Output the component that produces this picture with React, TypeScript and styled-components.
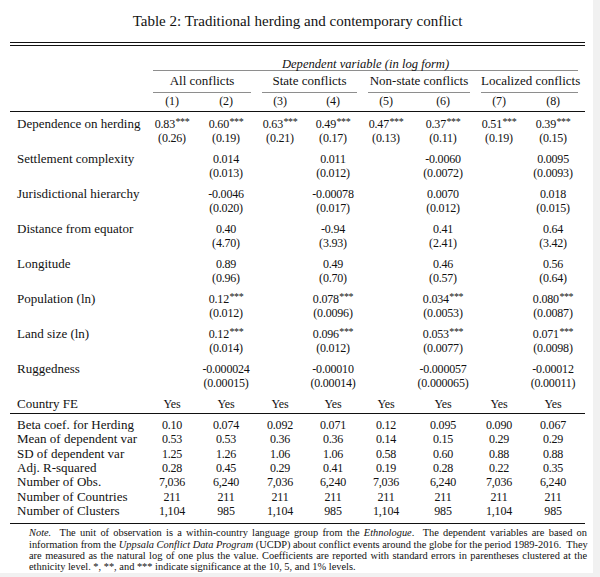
import React from "react";
import styled, { createGlobalStyle } from "styled-components";

const Global = createGlobalStyle`
  html, body { margin: 0; padding: 0; background: #f1f1f1; }
  body { width: 600px; height: 577px; overflow: hidden; }
`;

const Page = styled.div`
  width: 593px;
  height: 573px;
  background: #ffffff;
  box-sizing: border-box;
  padding: 12px 0 0 10px;
  color: #111111;
  font-family: "Liberation Serif", "Times New Roman", serif;
`;

const Title = styled.h1`
  margin: 0;
  width: 575px;
  text-align: center;
  font-size: 15px;
  line-height: 18px;
  font-weight: normal;
`;

const DoubleRule = styled.div`
  width: 575px;
  margin-top: 12px;
  height: 2px;
  border-top: 1px solid #111;
  border-bottom: 1px solid #111;
`;

const Table = styled.table`
  width: 575px;
  table-layout: fixed;
  border-collapse: separate;
  border-spacing: 0;
  font-family: "Liberation Serif", "Times New Roman", serif;
  color: #111111;
`;

const HeadCell = styled.th`
  padding: 0;
  font-weight: normal;
`;

const SpanLabel = styled.div<{ $l: number; $r: number; $pt: number; $pb: number; $italic?: boolean }>`
  margin: 0 ${(p) => p.$r}px 0 ${(p) => p.$l}px;
  padding: ${(p) => p.$pt}px 0 ${(p) => p.$pb}px;
  border-bottom: 1px solid #8e8e8e;
  text-align: center;
  font-size: ${(p) => (p.$italic ? 12.6 : 13)}px;
  line-height: ${(p) => (p.$italic ? 12 : 13)}px;
  font-style: ${(p) => (p.$italic ? "italic" : "normal")};
  white-space: nowrap;
`;

const NumHead = styled.th`
  padding: 2px 0 3px;
  font-weight: normal;
  font-size: 12px;
  letter-spacing: -0.2px;
  line-height: 13px;
  text-align: center;
  border-bottom: 1px solid #111;
  &:last-child { padding-right: 3px; }
`;

const LabelCell = styled.td<{ $pt: number; $pb: number; $lh: number; $rule?: boolean }>`
  padding: ${(p) => p.$pt}px 0 ${(p) => p.$pb}px 7px;
  vertical-align: top;
  font-size: 13px;
  line-height: ${(p) => p.$lh}px;
  white-space: nowrap;
  border-bottom: ${(p) => (p.$rule ? "1px solid #111" : "none")};
`;

const ValueCell = styled.td<{ $pt: number; $pb: number; $lh: number; $rule?: boolean }>`
  padding: ${(p) => p.$pt}px 0 ${(p) => p.$pb}px;
  vertical-align: top;
  text-align: center;
  font-size: 12px;
  letter-spacing: -0.2px;
  line-height: ${(p) => p.$lh}px;
  white-space: nowrap;
  border-bottom: ${(p) => (p.$rule ? "1px solid #111" : "none")};
  &:last-child { padding-right: 3px; }
`;

const Line = styled.div``;

const Stars = styled.sup`
  font-size: 10px;
  line-height: 0;
  vertical-align: 3px;
  letter-spacing: -0.4px;
  margin-left: 0.5px;
`;

const Note = styled.div`
  margin: 0 0 0 19px;
  width: 558px;
  padding-top: 3.5px;
  font-size: 10.4px;
  line-height: 11.3px;
`;

const NoteLine = styled.div<{ $last?: boolean }>`
  text-align: ${(p) => (p.$last ? "left" : "justify")};
  text-align-last: ${(p) => (p.$last ? "left" : "justify")};
  white-space: nowrap;
`;

const Em = styled.i``;

const colWidths = [136, 52, 56, 52, 54, 52, 62, 50, 61];

const groups: { label: string; l: number; r: number }[] = [
  { label: "All conflicts", l: 7, r: 3 },
  { label: "State conflicts", l: 8, r: 3 },
  { label: "Non-state conflicts", l: 8, r: 4 },
  { label: "Localized conflicts", l: 7, r: 7 },
];

type Pair = [string, string] | null;

const vars: { label: string; cells: Pair[] }[] = [
  {
    label: "Dependence on herding",
    cells: [
      ["0.83***", "(0.26)"], ["0.60***", "(0.19)"], ["0.63***", "(0.21)"], ["0.49***", "(0.17)"],
      ["0.47***", "(0.13)"], ["0.37***", "(0.11)"], ["0.51***", "(0.19)"], ["0.39***", "(0.15)"],
    ],
  },
  { label: "Settlement complexity", cells: [null, ["0.014", "(0.013)"], null, ["0.011", "(0.012)"], null, ["-0.0060", "(0.0072)"], null, ["0.0095", "(0.0093)"]] },
  { label: "Jurisdictional hierarchy", cells: [null, ["-0.0046", "(0.020)"], null, ["-0.00078", "(0.017)"], null, ["0.0070", "(0.012)"], null, ["0.018", "(0.015)"]] },
  { label: "Distance from equator", cells: [null, ["0.40", "(4.70)"], null, ["-0.94", "(3.93)"], null, ["0.41", "(2.41)"], null, ["0.64", "(3.42)"]] },
  { label: "Longitude", cells: [null, ["0.89", "(0.96)"], null, ["0.49", "(0.70)"], null, ["0.46", "(0.57)"], null, ["0.56", "(0.64)"]] },
  { label: "Population (ln)", cells: [null, ["0.12***", "(0.012)"], null, ["0.078***", "(0.0096)"], null, ["0.034***", "(0.0053)"], null, ["0.080***", "(0.0087)"]] },
  { label: "Land size (ln)", cells: [null, ["0.12***", "(0.014)"], null, ["0.096***", "(0.012)"], null, ["0.053***", "(0.0077)"], null, ["0.071***", "(0.0098)"]] },
  { label: "Ruggedness", cells: [null, ["-0.000024", "(0.00015)"], null, ["-0.00010", "(0.00014)"], null, ["-0.000057", "(0.000065)"], null, ["-0.00012", "(0.00011)"]] },
];

const stats: { label: string; values: string[] }[] = [
  { label: "Beta coef. for Herding", values: ["0.10", "0.074", "0.092", "0.071", "0.12", "0.095", "0.090", "0.067"] },
  { label: "Mean of dependent var", values: ["0.53", "0.53", "0.36", "0.36", "0.14", "0.15", "0.29", "0.29"] },
  { label: "SD of dependent var", values: ["1.25", "1.26", "1.06", "1.06", "0.58", "0.60", "0.88", "0.88"] },
  { label: "Adj. R-squared", values: ["0.28", "0.45", "0.29", "0.41", "0.19", "0.28", "0.22", "0.35"] },
  { label: "Number of Obs.", values: ["7,036", "6,240", "7,036", "6,240", "7,036", "6,240", "7,036", "6,240"] },
  { label: "Number of Countries", values: ["211", "211", "211", "211", "211", "211", "211", "211"] },
  { label: "Number of Clusters", values: ["1,104", "985", "1,104", "985", "1,104", "985", "1,104", "985"] },
];

function Coef({ text }: { text: string }) {
  const m = text.match(/^([^*]*)(\**)$/);
  const base = m ? m[1] : text;
  const st = m ? m[2] : "";
  return (
    <>
      {base}
      {st && <Stars>{st}</Stars>}
    </>
  );
}

export default function App() {
  return (
    <>
      <Global />
      <Page>
        <Title>Table 2: Traditional herding and contemporary conflict</Title>
        <DoubleRule />
        <Table>
          <colgroup>
            {colWidths.map((w, i) => (
              <col key={i} style={{ width: w }} />
            ))}
          </colgroup>
          <thead>
            <tr>
              <HeadCell />
              <HeadCell colSpan={8}>
                <SpanLabel $l={7} $r={7} $pt={12} $pb={0} $italic>
                  Dependent variable (in log form)
                </SpanLabel>
              </HeadCell>
            </tr>
            <tr>
              <HeadCell />
              {groups.map((g) => (
                <HeadCell key={g.label} colSpan={2}>
                  <SpanLabel $l={g.l} $r={g.r} $pt={3} $pb={5}>
                    {g.label}
                  </SpanLabel>
                </HeadCell>
              ))}
            </tr>
            <tr>
              <NumHead />
              {[1, 2, 3, 4, 5, 6, 7, 8].map((n) => (
                <NumHead key={n}>({n})</NumHead>
              ))}
            </tr>
          </thead>
          <tbody>
            {vars.map((v) => (
              <tr key={v.label}>
                <LabelCell $pt={5} $pb={2} $lh={14}>
                  {v.label}
                </LabelCell>
                {v.cells.map((c, i) => (
                  <ValueCell key={i} $pt={5} $pb={2} $lh={14}>
                    {c && (
                      <>
                        <Line>
                          <Coef text={c[0]} />
                        </Line>
                        <Line>{c[1]}</Line>
                      </>
                    )}
                  </ValueCell>
                ))}
              </tr>
            ))}
            <tr>
              <LabelCell $pt={5} $pb={2} $lh={14} $rule>
                Country FE
              </LabelCell>
              {[0, 1, 2, 3, 4, 5, 6, 7].map((i) => (
                <ValueCell key={i} $pt={5} $pb={2} $lh={14} $rule>
                  Yes
                </ValueCell>
              ))}
            </tr>
            {stats.map((s, ri) => {
              const first = ri === 0;
              const last = ri === stats.length - 1;
              const pt = first ? 4 : 0;
              const pb = last ? 4.5 : 0;
              return (
                <tr key={s.label}>
                  <LabelCell $pt={pt} $pb={pb} $lh={14.33} $rule={last}>
                    {s.label}
                  </LabelCell>
                  {s.values.map((val, i) => (
                    <ValueCell key={i} $pt={pt} $pb={pb} $lh={14.33} $rule={last}>
                      {val}
                    </ValueCell>
                  ))}
                </tr>
              );
            })}
          </tbody>
        </Table>
        <Note>
          <NoteLine>
            <Em>Note.</Em>&nbsp; The unit of observation is a within-country language group from the <Em>Ethnologue</Em>.&nbsp; The dependent variables are based on
          </NoteLine>
          <NoteLine>
            information from the <Em>Uppsala Conflict Data Program</Em> (UCDP) about conflict events around the globe for the period 1989-2016.&nbsp; They
          </NoteLine>
          <NoteLine>
            are measured as the natural log of one plus the value. Coefficients are reported with standard errors in parentheses clustered at the
          </NoteLine>
          <NoteLine $last>ethnicity level. *, **, and *** indicate significance at the 10, 5, and 1% levels.</NoteLine>
        </Note>
      </Page>
    </>
  );
}
